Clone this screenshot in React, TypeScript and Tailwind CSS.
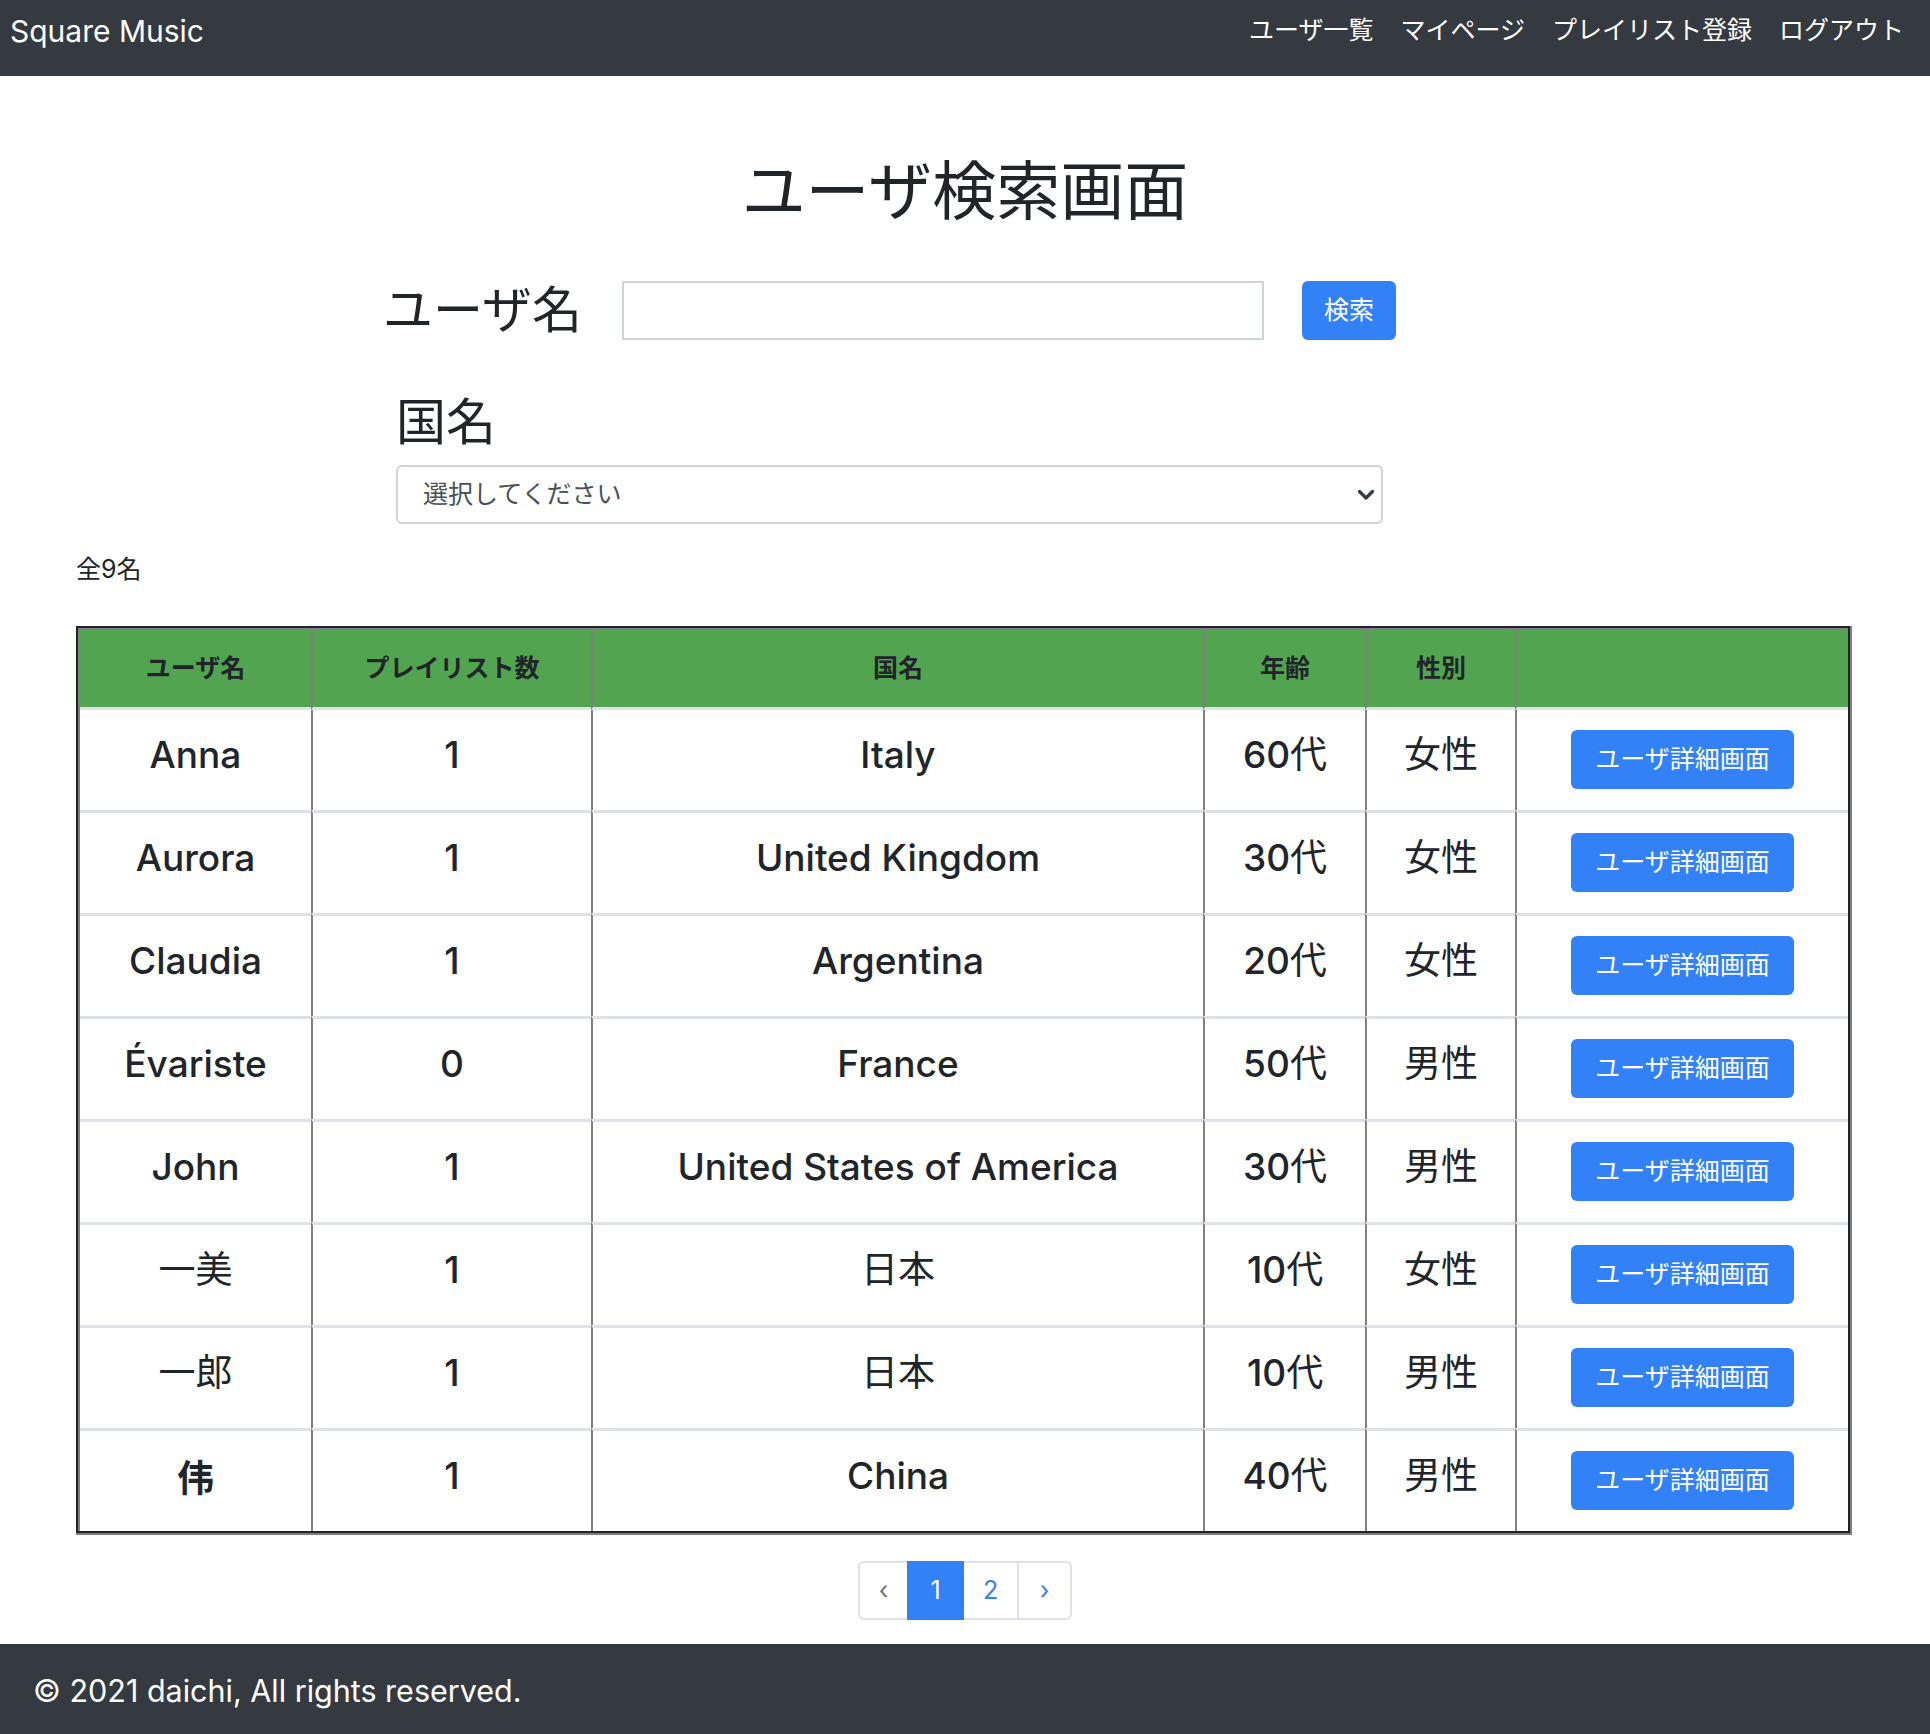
import React from "react";

const FONT = { fontFamily: '"Inter", "Noto Sans CJK JP", sans-serif' };
const CJK = /([\u3000-\u9fff\uff00-\uffef]+)/;

function Mixed({ text, cjkClass = "font-normal" }: { text: string; cjkClass?: string }) {
  const parts = text.split(CJK).filter((p) => p.length > 0);
  return (
    <>
      {parts.map((p, i) =>
        CJK.test(p) ? (
          <span key={i} className={cjkClass}>
            {p}
          </span>
        ) : (
          <span key={i} className="font-medium">
            {p}
          </span>
        )
      )}
    </>
  );
}

const rows: string[][] = [
  ["Anna", "1", "Italy", "60代", "女性"],
  ["Aurora", "1", "United Kingdom", "30代", "女性"],
  ["Claudia", "1", "Argentina", "20代", "女性"],
  ["Évariste", "0", "France", "50代", "男性"],
  ["John", "1", "United States of America", "30代", "男性"],
  ["一美", "1", "日本", "10代", "女性"],
  ["一郎", "1", "日本", "10代", "男性"],
  ["伟", "1", "China", "40代", "男性"],
];

const headers = ["ユーザ名", "プレイリスト数", "国名", "年齢", "性別", ""];

export default function App() {
  return (
    <div className="w-[1930px] min-h-[1734px] bg-white text-[#212529] flex flex-col" style={FONT}>
      {/* Navbar */}
      <nav className="h-[76px] bg-[#343a40] shrink-0">
        <div className="h-[61px] flex items-center justify-between pl-[10px] pr-[26px]">
          <span className="text-white text-[30px] leading-none">Square Music</span>
          <div className="flex items-center gap-[27px] text-white text-[25px] leading-none">
            <span>ユーザ一覧</span>
            <span>マイページ</span>
            <span>プレイリスト登録</span>
            <span>ログアウト</span>
          </div>
        </div>
      </nav>

      {/* Title */}
      <h1 className="mt-[77px] text-center text-[64px] leading-[75px] font-normal">ユーザ検索画面</h1>

      {/* Search row */}
      <div className="mt-[53px] ml-[383px] flex items-center h-[59px]">
        <span className="w-[239px] text-[50px] leading-[59px] font-normal">ユーザ名</span>
        <div className="w-[642px] h-[59px] border-2 border-[#ced4da] bg-white"></div>
        <button className="ml-[38px] w-[94px] h-[59px] rounded-[6px] bg-[#3381f6] text-white text-[25px] leading-none">
          検索
        </button>
      </div>

      {/* Country */}
      <div className="mt-[52px] ml-[396px]">
        <div className="text-[50px] leading-[60px] font-normal">国名</div>
        <div className="mt-[13px] w-[987px] h-[59px] border-2 border-[#ced4da] rounded-[6px] flex items-center justify-between pl-[25px] pr-[6px]">
          <span className="text-[25px] text-[#495057] leading-none">選択してください</span>
          <svg width="18" height="12" viewBox="0 0 18 12">
            <path d="M2.5 2.5 L9 9 L15.5 2.5" fill="none" stroke="#343a40" strokeWidth="3.2" strokeLinecap="round" strokeLinejoin="round" />
          </svg>
        </div>
      </div>

      {/* Count */}
      <div className="mt-[31px] ml-[76px] text-[25px] leading-[28px]">全9名</div>

      {/* Table */}
      <div className="mt-[43px] ml-[76px] w-[1776px] border-r-2 border-b-2 border-[#808080]">
        <div className="border-2 border-[#212529]">
          <div className="border-l-2 border-t-2 border-[#808080] grid grid-cols-[231px_280px_612px_162px_150px_333px]">
            {headers.map((h, i) => (
              <div
                key={i}
                className={`h-[80px] bg-[#53a451] border-b-[3px] border-b-[#dee2e6] flex items-center justify-center text-[25px] font-bold leading-none ${
                  i > 0 ? "border-l-2 border-l-[#808080]" : ""
                }`}
              >
                {h}
              </div>
            ))}
            {rows.map((r, ri) => (
              <React.Fragment key={ri}>
                {r.map((c, ci) => (
                  <div
                    key={ci}
                    className={`py-[20px] text-center text-[37px] leading-[50px] ${
                      ri > 0 ? "border-t-[3px] border-t-[#dee2e6]" : ""
                    } ${ci > 0 ? "border-l-2 border-l-[#808080]" : ""}`}
                  >
                    <div className="h-[60px]">
                      {c === "伟" ? (
                        <span className="font-semibold" style={{ fontFamily: '"Noto Sans CJK SC", sans-serif' }}>
                          {c}
                        </span>
                      ) : (
                        <Mixed text={c} />
                      )}
                    </div>
                  </div>
                ))}
                <div
                  className={`py-[20px] flex justify-center border-l-2 border-l-[#808080] ${
                    ri > 0 ? "border-t-[3px] border-t-[#dee2e6]" : ""
                  }`}
                >
                  <div className="h-[60px] flex items-start justify-center">
                    <button className="w-[223px] h-[59px] rounded-[6px] bg-[#3381f6] text-white text-[25px] leading-none">
                      ユーザ詳細画面
                    </button>
                  </div>
                </div>
              </React.Fragment>
            ))}
          </div>
        </div>
      </div>

      {/* Pagination */}
      <div className="mt-[26px] flex justify-center">
        <div className="flex text-[25px] leading-none">
          <div className="w-[51px] h-[59px] border-2 border-[#dee2e6] rounded-l-[6px] flex items-center justify-center text-[#6c757d]">
            ‹
          </div>
          <div className="-ml-[2px] w-[57px] h-[59px] border-2 border-[#3381f6] bg-[#3381f6] text-white flex items-center justify-center relative z-10">
            1
          </div>
          <div className="-ml-[2px] w-[57px] h-[59px] border-2 border-[#dee2e6] text-[#3381f6] flex items-center justify-center">
            2
          </div>
          <div className="-ml-[2px] w-[55px] h-[59px] border-2 border-[#dee2e6] rounded-r-[6px] text-[#3381f6] flex items-center justify-center">
            ›
          </div>
        </div>
      </div>

      {/* Footer */}
      <footer className="mt-[24px] h-[90px] bg-[#343a40] flex items-center pl-[33px] pt-[4px] shrink-0">
        <span className="text-white text-[30.5px] leading-none">© 2021 daichi, All rights reserved.</span>
      </footer>
    </div>
  );
}
